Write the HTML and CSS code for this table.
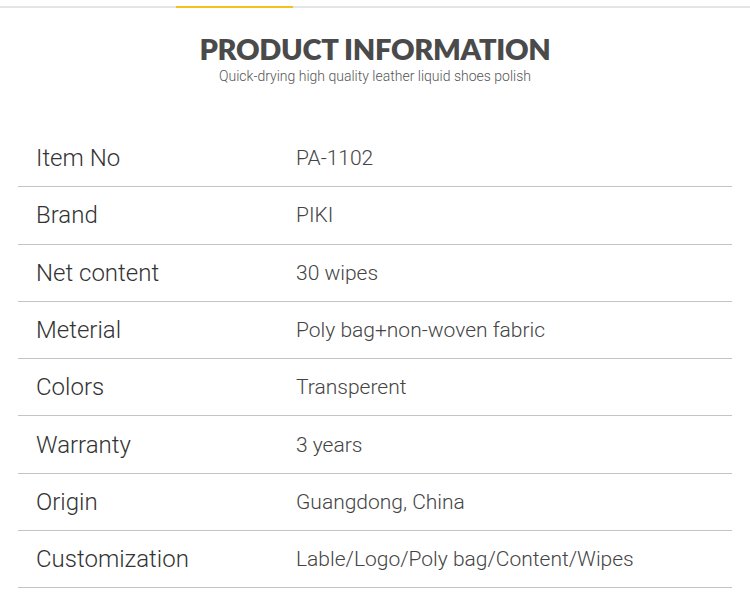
FILE: index.html
```html
<!DOCTYPE html>
<html>
<head>
<meta charset="utf-8">
<link rel="stylesheet" href="styles.css">
</head>
<body>
<div class="topbar"><div class="accent"></div></div>
<header class="head">
  <h1 class="title">PRODUCT INFORMATION</h1>
  <p class="subtitle">Quick-drying high quality leather liquid shoes polish</p>
</header>
<div class="table">
  <div class="row"><div class="label">Item No</div><div class="value">PA-1102</div></div>
  <div class="row"><div class="label">Brand</div><div class="value">PIKI</div></div>
  <div class="row"><div class="label">Net content</div><div class="value">30 wipes</div></div>
  <div class="row"><div class="label">Meterial</div><div class="value">Poly bag+non-woven fabric</div></div>
  <div class="row"><div class="label">Colors</div><div class="value">Transperent</div></div>
  <div class="row"><div class="label">Warranty</div><div class="value">3 years</div></div>
  <div class="row"><div class="label">Origin</div><div class="value">Guangdong, China</div></div>
  <div class="row"><div class="label">Customization</div><div class="value">Lable/Logo/Poly bag/Content/Wipes</div></div>
</div>
</body>
</html>
```
FILE: styles.css
```css
html, body { margin: 0; padding: 0; background: #fff; }
body { font-family: "Roboto", "Liberation Sans", sans-serif; color: #333; }
.topbar { margin-top: 6px; height: 2px; background: #e4e4e4; }
.accent { margin-left: 176px; width: 117px; height: 2px; background: #f4c21b; }
.head { text-align: center; padding-top: 24px; }
.title { margin: 0; font-family: "Lato", "Liberation Sans", sans-serif; font-weight: 800; font-size: 29px; line-height: 34px; color: #4a4a4a; letter-spacing: -0.3px; }
.subtitle { margin: 0; margin-top: 2px; font-family: "Roboto", sans-serif; font-weight: 300; font-size: 14px; line-height: 17px; color: #555; }
.table { margin: 45px 18px 0; }
.row { display: grid; grid-template-columns: 278px 1fr; align-items: center; height: 57.3px; box-sizing: border-box; border-bottom: 1px solid #c4c4c4; }
.label { padding-left: 18px; font-size: 24px; font-weight: 300; color: #333; }
.value { font-size: 21px; font-weight: 300; color: #444; }
```
